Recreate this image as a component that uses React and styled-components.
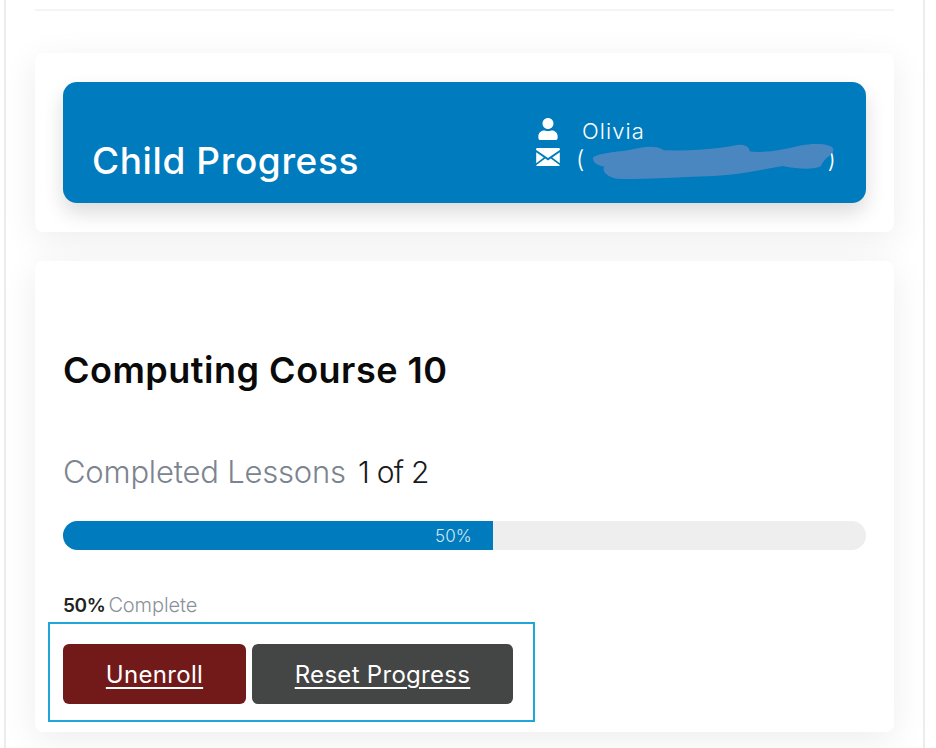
import styled, { createGlobalStyle } from 'styled-components'
import { FaUser } from 'react-icons/fa'

const GlobalStyle = createGlobalStyle`
  html, body {
    margin: 0;
    padding: 0;
    height: 748px;
    overflow: hidden;
    background: #fff;
    font-family: Inter, "Open Sans", sans-serif;
  }
  * { box-sizing: border-box; }
`

const Frame = styled.div`
  width: 921px;
  height: 748px;
  margin-left: 4px;
  padding: 0 29px;
  border-left: 2px solid #ececec;
  border-right: 2px solid #ececec;
  overflow: hidden;
`

const Rule = styled.div`
  height: 2px;
  margin: 9px 0 42px;
  background: #f4f4f4;
`

const Card = styled.section`
  background: #fff;
  border-radius: 8px;
  padding: ${props => props.$padding};
  margin-bottom: 29px;
  box-shadow: 0 8px 36px rgba(0, 0, 0, 0.075);
`

const Hero = styled.div`
  height: 121px;
  padding: 0 30px 0 29px;
  display: flex;
  justify-content: space-between;
  background: #007bbd;
  color: #fff;
  border-radius: 14px;
  box-shadow: 0 10px 20px rgba(0, 0, 0, 0.14);
`

const HeroTitle = styled.h2`
  margin: 57px 0 0;
  font-size: 37px;
  line-height: 44px;
  font-weight: 500;
  letter-spacing: 0.6px;
`

const Contact = styled.div`
  width: 300px;
  padding-top: 34px;
  display: flex;
  flex-direction: column;
  gap: 2px;
`

const ContactRow = styled.div`
  position: relative;
  height: 26px;
  display: flex;
  align-items: center;
  gap: ${props => props.$gap}px;
  font-size: 22px;
  font-weight: 300;
  letter-spacing: 1.1px;
`

const IconBox = styled.span`
  width: 24px;
  flex: none;
  display: flex;
  justify-content: center;
`

const ContactName = styled.span`
  padding-top: 4px;
`

const Email = styled.span`
  width: 261px;
  flex: none;
  padding-top: 4px;
  display: flex;
  justify-content: space-between;
  font-size: 24px;
`

const Smear = styled.svg`
  position: absolute;
  left: 54px;
  top: -2px;
  width: 247px;
  height: 38px;
`

const CourseTitle = styled.h3`
  margin: 0 0 62px;
  font-size: 36px;
  line-height: 44px;
  font-weight: 600;
  letter-spacing: 0.5px;
  color: #0a0a0a;
`

const Lessons = styled.div`
  display: flex;
  gap: 12px;
  font-size: 31px;
  line-height: 36px;
  font-weight: 300;
  letter-spacing: -0.2px;
  color: #7c8490;
`

const LessonCount = styled.span`
  font-size: 30px;
  letter-spacing: -0.75px;
  color: #1a1a1a;
`

const Track = styled.div`
  height: 29px;
  margin-top: 31px;
  background: #eeeeee;
  border-radius: 15px;
  overflow: hidden;
`

const Fill = styled.div`
  height: 100%;
  padding-right: 21px;
  display: flex;
  align-items: center;
  justify-content: flex-end;
  background: #007bbd;
  color: #d4e8f4;
  font-size: 17px;
  font-weight: 300;
`

const CompleteLine = styled.div`
  margin-top: 44px;
  display: flex;
  gap: 3px;
  align-items: baseline;
  font-size: 20px;
  line-height: 23px;
  font-weight: 300;
  letter-spacing: -0.1px;
  color: #8a919c;
`

const CompleteValue = styled.b`
  font-size: 19px;
  font-weight: 600;
  letter-spacing: -0.4px;
  color: #222;
`

const Highlight = styled.div`
  width: 487px;
  height: 100px;
  margin: 5px 0 0 -15px;
  padding: 20px 0 0 13px;
  display: flex;
  gap: 6px;
  border: 2px solid #1ea6d9;
`

const ActionButton = styled.a`
  width: ${props => props.$width}px;
  height: 60px;
  display: flex;
  align-items: center;
  justify-content: center;
  background: ${props => props.$color};
  color: #fff;
  border-radius: 6px;
  font-size: 24px;
  letter-spacing: 0.3px;
  text-decoration: underline;
  text-decoration-thickness: 2px;
  text-underline-offset: 4px;
`

const EnvelopeIcon = () => (
  <svg width="24" height="18" viewBox="0 0 25 19" fill="#fff">
    <path d="M1 0h23a1 1 0 0 1 1 1v1.2L12.5 10.5 0 2.2V1a1 1 0 0 1 1-1z" />
    <path d="M0 4.4v11.8L8 9.9z" />
    <path d="M25 4.4v11.8l-8-6.3z" />
    <path d="M9.6 11.1l2.9 2 2.9-2L25 18.2V18a1 1 0 0 1-1 1H1a1 1 0 0 1-1-1v.2z" />
  </svg>
)

const RedactionSmear = () => (
  <Smear viewBox="270 215 740 115">
    <path
      fill="#4a87c1"
      d="M275 262 C300 244 360 246 400 236 C430 228 470 224 490 240 C560 242 650 236 700 226 C725 220 748 224 750 244 C800 248 850 238 900 226 C950 216 1005 220 1003 240 C1000 255 975 262 965 288 C945 300 900 298 850 288 C790 298 720 314 640 318 C540 320 440 330 350 326 C318 322 300 302 310 290 C290 286 275 280 275 262 Z"
    />
  </Smear>
)

const App = () => {
  const percent = 53.5

  return (
    <>
      <GlobalStyle />
      <Frame>
        <Rule />
        <Card $padding="29px 28px">
          <Hero>
            <HeroTitle>Child Progress</HeroTitle>
            <Contact>
              <ContactRow $gap={22}>
                <IconBox><FaUser size={22} /></IconBox>
                <ContactName>Olivia</ContactName>
              </ContactRow>
              <ContactRow $gap={16}>
                <IconBox><EnvelopeIcon /></IconBox>
                <Email>
                  <span>(</span>
                  <span>)</span>
                </Email>
                <RedactionSmear />
              </ContactRow>
            </Contact>
          </Hero>
        </Card>
        <Card $padding="87px 28px 10px">
          <CourseTitle>Computing Course 10</CourseTitle>
          <Lessons>
            <span>Completed Lessons</span>
            <LessonCount>1 of 2</LessonCount>
          </Lessons>
          <Track>
            <Fill style={{ width: `${percent}%` }}>50%</Fill>
          </Track>
          <CompleteLine>
            <CompleteValue>50%</CompleteValue>
            <span>Complete</span>
          </CompleteLine>
          <Highlight>
            <ActionButton $width={183} $color="#721a1a">Unenroll</ActionButton>
            <ActionButton $width={261} $color="#444545">Reset Progress</ActionButton>
          </Highlight>
        </Card>
      </Frame>
    </>
  )
}

export default App
